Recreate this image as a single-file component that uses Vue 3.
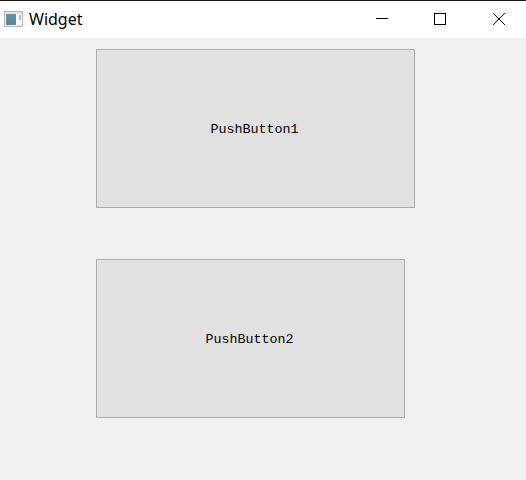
<template>
  <div class="window">
    <header class="titlebar">
      <svg class="app-icon" width="19" height="16" viewBox="0 0 19 16">
        <defs>
          <linearGradient id="pane" x1="0" y1="0" x2="0" y2="1">
            <stop offset="0" stop-color="#5f93b4" />
            <stop offset="1" stop-color="#5b8a86" />
          </linearGradient>
        </defs>
        <rect x="0.5" y="0.5" width="18" height="15" fill="#f6f7f8" stroke="#b4b8ba" />
        <rect x="1" y="1" width="17" height="2" fill="#dfe5e9" />
        <rect x="2" y="3" width="10" height="11" fill="url(#pane)" />
        <rect x="15" y="4" width="2" height="5" fill="#a9c3d6" />
      </svg>
      <span class="title">Widget</span>
      <div class="controls">
        <svg class="control" width="58" height="38" viewBox="0 0 58 38">
          <path d="M24 18.5H36" stroke="#000" fill="none" />
        </svg>
        <svg class="control" width="58" height="38" viewBox="0 0 58 38">
          <rect x="24.5" y="13.5" width="11" height="11" stroke="#000" fill="none" />
        </svg>
        <svg class="control" width="58" height="38" viewBox="0 0 58 38">
          <path d="M25 13L37 25M37 13L25 25" stroke="#000" fill="none" />
        </svg>
      </div>
    </header>
    <main class="content">
      <button class="push first">PushButton1</button>
      <button class="push second">PushButton2</button>
    </main>
  </div>
</template>

<script setup>
</script>

<style>
html, body {
  margin: 0;
  background: #f0f0f0;
}
</style>

<style scoped>
.window {
  width: 526px;
  height: 480px;
  overflow: hidden;
  background: #f0f0f0;
  box-sizing: border-box;
}

.titlebar {
  height: 38px;
  box-sizing: border-box;
  border-top: 1px solid #1a1a1a;
  background: #fff;
  display: flex;
  align-items: center;
  padding-left: 4px;
}

.app-icon {
  flex: none;
  margin-top: -1px;
}

.title {
  margin-left: 6px;
  margin-top: -1px;
  font-family: "Noto Sans", "Open Sans", sans-serif;
  font-size: 16px;
  color: #000;
}

.controls {
  margin-left: auto;
  display: flex;
  margin-top: -1px;
}

.control {
  display: block;
}

.content {
  display: flex;
  flex-direction: column;
  align-items: flex-start;
  gap: 51px;
  padding: 11px 0 0 96px;
}

.push {
  height: 159px;
  box-sizing: border-box;
  padding: 2px 2px 0 0;
  border: 1px solid #adadad;
  border-radius: 0;
  background: #e1e1e1;
  color: #000;
  font-family: "Liberation Mono", monospace;
  font-size: 13.33px;
}

.first {
  width: 319px;
}

.second {
  width: 309px;
}
</style>
